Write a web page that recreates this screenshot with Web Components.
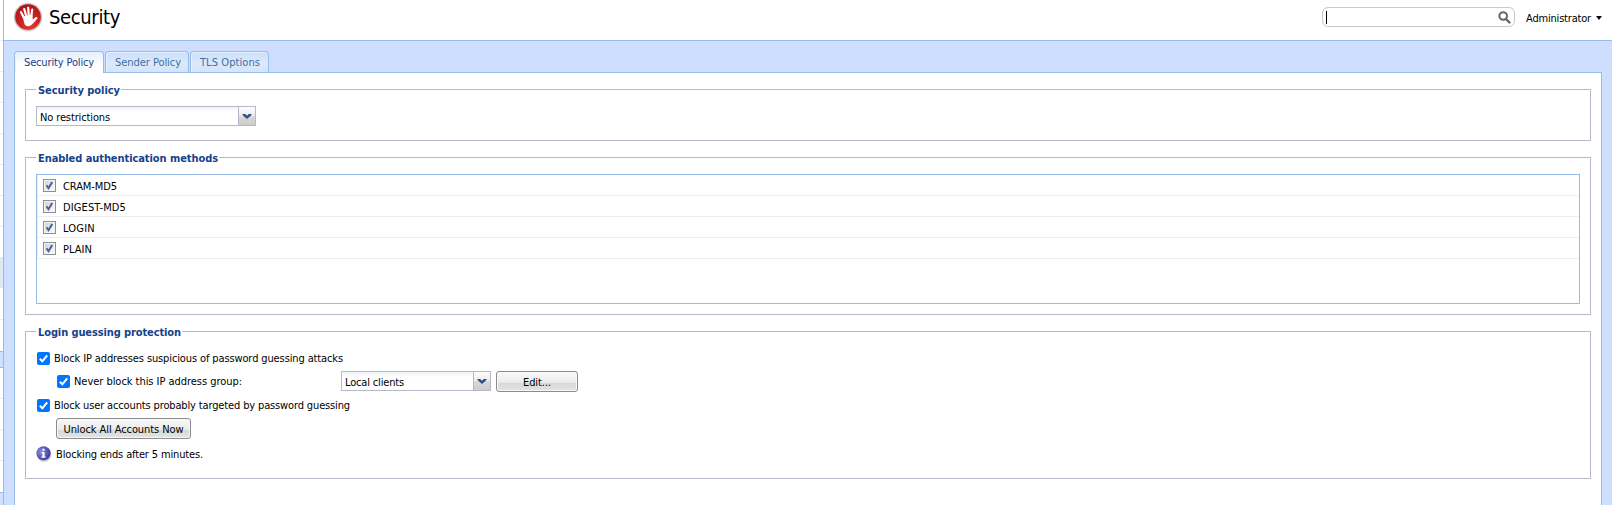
<!DOCTYPE html>
<html lang="en"><head><meta charset="utf-8"><title>Security</title>
<style>
html,body{margin:0;height:100%;overflow:hidden;background:#fff}
body{font:11px/14px "DejaVu Sans Condensed","DejaVu Sans",sans-serif;font-stretch:condensed;color:#000}
</style></head><body>
<security-app></security-app>
<script>
const define=(name,css,html,setup)=>customElements.define(name,class extends HTMLElement{
  connectedCallback(){
    if(this.shadowRoot)return;
    const a=k=>this.getAttribute(k)||'';
    this.attachShadow({mode:'open'}).innerHTML='<style>*{box-sizing:border-box}'+css+'</style>'+(typeof html==='function'?html(a):html);
    if(setup)setup(this,a);
  }
});

/* A single line of text tracked to a given width */
define('ui-text',':host{display:block;flex:none;white-space:nowrap}span{display:inline-block}','<span><slot></slot></span>',(el,a)=>{
  const s=el.shadowRoot.querySelector('span'),w=+a('w');
  el.style.width=w+'px';
  s.style.letterSpacing=((w-s.getBoundingClientRect().width)/el.textContent.length)+'px';
});

define('nav-edge',`:host{display:flex;flex-direction:column;flex:none;width:4px;height:505px;border-right:1px solid #99bbe8;background:#fff;padding-top:10px}
i{display:block;flex:none;height:31px;border-bottom:1px solid #e3ebf5}
.sel{background:#dfe8f3;border-color:#dfe8f3}.gap{height:31px;border:0}
.hd{height:17px;background:#cfdfff;border:solid #99bbe8;border-width:1px 0}`,
'<i></i><i></i><i></i><i></i><i></i><i></i><i></i><i style="height:30px;border:0"></i><i class="sel"></i><i style="height:32px"></i><i class="gap"></i><i class="hd"></i><i></i><i></i><i></i><i class="gap"></i><i class="hd"></i>');

define('hand-logo',':host{display:block;width:30px;height:30px;flex:none}svg{display:block}',
`<svg width="30" height="30" viewBox="0 0 30 30"><defs><radialGradient id="g" cx=".6" cy=".85" r=".85"><stop offset="0" stop-color="#e23a30"/><stop offset=".55" stop-color="#c8211f"/><stop offset="1" stop-color="#b01518"/></radialGradient></defs>
<circle cx="15" cy="15.3" r="14.5" fill="#e0e0e0"/><circle cx="15" cy="15" r="13.6" fill="#c0b2b2"/><circle cx="15" cy="15" r="12.8" fill="url(#g)"/>
<g fill="none" stroke="#fff" stroke-linecap="round" stroke-width="2.2"><path d="M10.8 15.5 8 10.2M13.2 14 11.2 7M15.8 14 15.2 5.9M18.2 15 19.2 7.6M18.3 20.2 23.4 16.2"/></g>
<path fill="#fff" d="M9.7 14.5 19.3 13l.6 5.4 1.3-1.2 1.5 1.2-4 4.4q-2 2-5 1.3-2.3-.8-2.7-3.9z"/></svg>`);

define('search-box',`:host{display:flex;flex:none;width:193px;height:20px;border:1px solid #c9c9c9;border-radius:6px;background:#fff;align-items:center;justify-content:space-between;padding:0 3px 0 3px}
i{width:1px;height:13px;background:#000}svg{display:block;margin-top:1px}`,
'<i></i><svg width="13" height="13" viewBox="0 0 13 13"><circle cx="5.2" cy="5" r="3.8" fill="none" stroke="#666" stroke-width="2"/><path d="m8 8 3.5 3.5" stroke="#666" stroke-width="2.4" stroke-linecap="round"/></svg>');

define('app-header',`:host{display:flex;height:41px;border-bottom:1px solid #99bbe8;background:#fff;padding:0 10px 0 9px}
hand-logo{margin-top:2px}.title{font-size:20px;line-height:24px;margin:5px 0 0 6px}
search-box{margin:7px 11px 0 auto}.user{margin-top:12px;}svg{margin:16px 0 0 5px;display:block}`,
`<hand-logo></hand-logo><ui-text class="title" w="71">Security</ui-text><search-box></search-box><ui-text class="user" w="65">Administrator</ui-text><svg width="6" height="4" viewBox="0 0 6 4"><path d="M0 0h6L3 4z"/></svg>`);

define('ui-tab',`:host{display:block;width:var(--tw);height:21px;border:1px solid #99bbe8;border-bottom:0;border-radius:4px 4px 0 0;background:linear-gradient(#c9dffa,#dce9fb 55%,#d4e4f9);color:#416da3;padding:4px 0 0 9px;box-shadow:inset 1px 1px #e8f2ff}
:host([active]){height:22px;margin-bottom:-1px;background:linear-gradient(#e5effc,#fff 65%);color:#15428b}`,'<slot></slot>');

define('ui-fieldset',`:host{display:block;height:var(--h);border:1px solid #b5b8c8;margin-bottom:16px}
header{display:flex;height:16px;margin:-8px 0 0 10px;width:max-content;padding:1px 1px 0 2px;background:#fff;font-weight:bold;color:#15428b;line-height:16px}`,
a=>`<header><ui-text w="${a('lw')}">${a('legend')}</ui-text></header><slot></slot>`);

define('ui-combo',`:host{display:flex;flex:none;height:20px;border:1px solid #b5b8c8;background:linear-gradient(#eef3f3,#fff 5px)}
div{flex:1;padding:4px 0 0 3px}i{width:17px;border-left:1px solid #b5b8c8;background:linear-gradient(#fdfdfd,#ececec 48%,#d9d9d9 50%,#cdcdcd)}svg{display:block;margin:6px 0 0 3px}`,
'<div><slot></slot></div><i><svg width="10" height="7" viewBox="0 0 10 7"><path d="M.5 1h2.7L5 2.8 6.8 1h2.7v1L5 6 .5 2z" fill="#2d4f8b"/></svg></i>');

define('grid-check',':host{display:block;flex:none;width:13px;height:13px;border:1px solid #8e8f8f;background:linear-gradient(135deg,#cbcfd5,#f6f6f6 80%);box-shadow:inset 0 0 0 1px #f4f4f4}svg{display:block}',
'<svg width="11" height="11" viewBox="0 0 11 11"><path d="m2.5 5.2 2 3L8.2 2" fill="none" stroke="#4b5f97" stroke-width="2"/></svg>');

define('auth-list',`:host{display:block;height:130px;margin:8px 10px 0;border:1px solid #99bbe8}
div{display:flex;height:21px;border-bottom:1px solid #ededed;border-left:1px solid #ededed;padding:4px 0 0 5px;gap:7px}ui-text{margin-top:1px}`,
`<div><grid-check></grid-check><ui-text w="54">CRAM-MD5</ui-text></div><div><grid-check></grid-check><ui-text w="63">DIGEST-MD5</ui-text></div><div><grid-check></grid-check><ui-text w="32">LOGIN</ui-text></div><div><grid-check></grid-check><ui-text w="29">PLAIN</ui-text></div>`);

define('ui-check',':host{display:flex;flex:none;gap:4px;height:14px}svg{display:block;flex:none}',
'<svg width="13" height="13" viewBox="0 0 13 13"><rect width="13" height="13" rx="2" fill="#0075ff"/><path d="m2.8 6.7 2.6 2.6 4.8-6" fill="none" stroke="#fff" stroke-width="2"/></svg><slot></slot>');

define('ui-button',':host{display:flex;justify-content:center;flex:none;height:21px;border:1px solid #8c8c8c;border-radius:3px;background:linear-gradient(#f9f9f9,#ebebeb 55%,#d8d8d8 57%,#e3e3e3);padding-top:4px;box-shadow:inset 0 0 0 1px #f7f7f7}','<slot></slot>');

define('info-icon',':host{display:block;width:16px;height:16px;flex:none}',
'<svg width="16" height="16" viewBox="0 0 16 16"><defs><radialGradient id="b" cx=".35" cy=".4" r=".65"><stop stop-color="#8f8fdc"/><stop offset=".55" stop-color="#5f5fbc"/><stop offset="1" stop-color="#3c3c96"/></radialGradient></defs><circle cx="8" cy="8.3" r="7.4" fill="#c4c4d4"/><circle cx="7.5" cy="7.3" r="7" fill="url(#b)"/><path fill="#fff" d="M6.4 2.8h2.2v2H6.4zM5.6 6h3v4.6h1v1.2H5.4v-1.2h1V7.2h-.8z"/></svg>');

define('login-protection',`:host{display:block;padding:0 0 0 11px}div{display:flex}.a{height:19px;margin-top:12px}.b{height:24px;padding-left:20px}.b ui-check{margin-top:4px;width:284px}.b ui-button{width:82px;margin-left:5px}.c{height:23px}.d{height:28px;padding-left:19px}.e{gap:4px;margin-left:-1px}.e ui-text{margin-top:2px}.c{padding-top:4px}`,
`<div class="a"><ui-check><ui-text w="289">Block IP addresses suspicious of password guessing attacks</ui-text></ui-check></div>
<div class="b"><ui-check><ui-text w="168">Never block this IP address group:</ui-text></ui-check><ui-combo style="width:150px"><ui-text w="59">Local clients</ui-text></ui-combo><ui-button><ui-text w="28">Edit...</ui-text></ui-button></div>
<div class="c"><ui-check><ui-text w="296">Block user accounts probably targeted by password guessing</ui-text></ui-check></div>
<div class="d"><ui-button style="width:135px"><ui-text w="120">Unlock All Accounts Now</ui-text></ui-button></div>
<div class="e"><info-icon></info-icon><ui-text w="147">Blocking ends after 5 minutes.</ui-text></div>`);

define('security-app',`:host{display:flex;width:1612px;height:505px}main{flex:1;min-width:0;background:#cedeff}
nav{display:flex;align-items:flex-end;height:31px;padding:0 0 0 10px;gap:1px}
section{margin:0 10px;border:1px solid #99bbe8;border-bottom:0;background:#fff;height:433px;padding:16px 10px 0}`,
`<nav-edge></nav-edge><main><app-header></app-header>
<nav><ui-tab active style="--tw:90px"><ui-text w="70">Security Policy</ui-text></ui-tab><ui-tab style="--tw:84px"><ui-text w="66">Sender Policy</ui-text></ui-tab><ui-tab style="--tw:79px"><ui-text w="60">TLS Options</ui-text></ui-tab></nav>
<section><ui-fieldset legend="Security policy" lw="82" style="--h:52px"><ui-combo style="width:220px;margin:8px 0 0 10px"><ui-text w="70">No restrictions</ui-text></ui-combo></ui-fieldset>
<ui-fieldset legend="Enabled authentication methods" lw="180" style="--h:158px"><auth-list></auth-list></ui-fieldset>
<ui-fieldset legend="Login guessing protection" lw="143" style="--h:148px"><login-protection></login-protection></ui-fieldset></section></main>`);
</script></body></html>
